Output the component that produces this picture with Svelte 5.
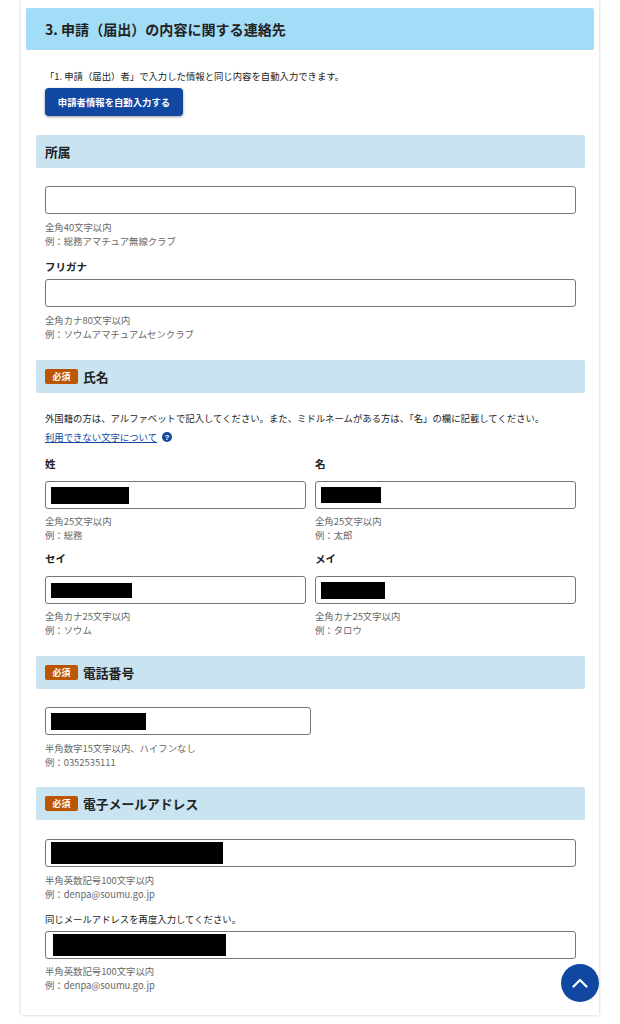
<script>
	const nameFields = [
		[
			{ label: '姓', limit: '全角25文字以内', example: '例：総務', mask: 78, maskH: 17 },
			{ label: '名', limit: '全角25文字以内', example: '例：太郎', mask: 60, maskH: 16 }
		],
		[
			{ label: 'セイ', limit: '全角カナ25文字以内', example: '例：ソウム', mask: 81, maskH: 15 },
			{ label: 'メイ', limit: '全角カナ25文字以内', example: '例：タロウ', mask: 64, maskH: 17 }
		]
	];
</script>

<div class="page">
	<main class="card">
		<h2 class="title">3. 申請（届出）の内容に関する連絡先</h2>

		<div class="autofill">
			<p class="note">「1. 申請（届出）者」で入力した情報と同じ内容を自動入力できます。</p>
			<button class="fill-btn" type="button">申請者情報を自動入力する</button>
		</div>

		<section class="section">
			<h3 class="head">所属</h3>
			<div class="body">
				<div class="field"></div>
				<p class="hint">全角40文字以内<br />例：総務アマチュア無線クラブ</p>
				<div class="label kana">フリガナ</div>
				<div class="field"></div>
				<p class="hint">全角カナ80文字以内<br />例：ソウムアマチュアムセンクラブ</p>
			</div>
		</section>

		<section class="section">
			<h3 class="head"><span class="req">必須</span>氏名</h3>
			<div class="body">
				<p class="note">外国籍の方は、アルファベットで記入してください。また、ミドルネームがある方は、「名」の欄に記載してください。</p>
				<p class="link-row">
					<a href="#chars">利用できない文字について</a>
					<span class="help">?</span>
				</p>
				{#each nameFields as row}
					<div class="row">
						{#each row as f}
							<div>
								<div class="label">{f.label}</div>
								<div class="field"><span class="mask" style="width: {f.mask}px; height: {f.maskH}px"></span></div>
								<p class="hint tight">{f.limit}<br />{f.example}</p>
							</div>
						{/each}
					</div>
				{/each}
			</div>
		</section>

		<section class="section">
			<h3 class="head"><span class="req">必須</span>電話番号</h3>
			<div class="body">
				<div class="field short"><span class="mask" style="width: 95px; height: 17px"></span></div>
				<p class="hint">半角数字15文字以内、ハイフンなし<br />例：0352535111</p>
			</div>
		</section>

		<section class="section mail">
			<h3 class="head"><span class="req">必須</span>電子メールアドレス</h3>
			<div class="body">
				<div class="field"><span class="mask" style="width: 172px; height: 22px"></span></div>
				<p class="hint mail-hint">半角英数記号100文字以内<br />例：denpa@soumu.go.jp</p>
				<p class="note again">同じメールアドレスを再度入力してください。</p>
				<div class="field"><span class="mask second" style="width: 173px; height: 22px"></span></div>
				<p class="hint mail-hint">半角英数記号100文字以内<br />例：denpa@soumu.go.jp</p>
			</div>
		</section>
	</main>

	<button class="to-top" type="button" aria-label="ページの先頭へ">
		<svg width="16" height="10" viewBox="0 0 16 10" fill="none">
			<path d="M1.500 8.500 8 2l6.500 6.500" stroke="#fff" stroke-width="2.200" stroke-linecap="round" stroke-linejoin="round" />
		</svg>
	</button>
</div>

<style>
	:global(body) {
		background: #fff;
		font-family: "Noto Sans CJK JP", "Noto Sans", sans-serif;
		color: #1a1a1a;
	}

	.page {
		position: relative;
		width: 620px;
		height: 1024px;
		overflow: hidden;
	}

	.card {
		width: 578px;
		height: 1015px;
		margin-left: 21px;
		padding: 8px 5px 0;
		box-sizing: border-box;
		background: #fff;
		box-shadow: 0 0 3px rgba(0, 0, 0, 0.22);
	}

	.title {
		margin: 0;
		height: 42px;
		padding-left: 19px;
		display: flex;
		align-items: center;
		font-size: 14.06px;
		font-weight: 700;
		background: #a3dcf7;
		border-radius: 2px;
		color: #222;
	}

	.autofill {
		padding: 19px 0 0 19px;
	}

	.note {
		margin: 0;
		font-size: 9.375px;
		line-height: 14px;
		color: #222;
	}

	.fill-btn {
		display: block;
		width: 138px;
		height: 28px;
		margin-top: 5px;
		padding: 0;
		border: 0;
		border-radius: 4px;
		background: #0f47a1;
		color: #fff;
		font: 700 9.375px "Noto Sans CJK JP", sans-serif;
		box-shadow: 0 1px 3px rgba(0, 0, 0, 0.4);
	}

	.section {
		margin: 19px 9px 0 10px;
	}

	.mail {
		margin-top: 18px;
	}

	.head {
		margin: 0;
		height: 33px;
		padding-left: 9px;
		display: flex;
		align-items: center;
		font-size: 12.8px;
		font-weight: 700;
		background: #c9e3f1;
		border-radius: 2px;
		color: #222;
	}

	.req {
		width: 33px;
		height: 15px;
		margin-right: 5px;
		display: flex;
		align-items: center;
		justify-content: center;
		font-size: 9px;
		color: #fff;
		background: #bb5500;
		border-radius: 2px;
	}

	.body {
		padding: 18px 9px 0;
	}

	.mail .body {
		padding-top: 19px;
	}

	.field {
		height: 28px;
		padding-left: 5px;
		box-sizing: border-box;
		display: flex;
		align-items: center;
		background: #fff;
		border: 1px solid #777;
		border-radius: 3px;
	}

	.short {
		width: 266px;
	}

	.mask {
		background: #000;
	}

	.second {
		margin-left: 2px;
	}

	.hint {
		margin: 6px 0 0;
		font-size: 9.375px;
		line-height: 14px;
		color: #666;
	}

	.tight {
		margin-top: 5px;
	}

	.mail-hint {
		margin-top: 5.5px;
	}

	.label {
		height: 18px;
		margin-bottom: 8px;
		font-size: 10.5px;
		line-height: 18px;
		font-weight: 700;
		color: #222;
	}

	.kana {
		margin-top: 10px;
		margin-bottom: 3px;
	}

	.link-row {
		display: flex;
		align-items: center;
		gap: 5px;
		margin: 5px 0 11px;
		font-size: 9.375px;
		line-height: 14px;
	}

	.link-row a {
		color: #0f47a1;
	}

	.help {
		width: 10px;
		height: 10px;
		border-radius: 50%;
		display: flex;
		align-items: center;
		justify-content: center;
		background: #0f47a1;
		color: #fff;
		font: 700 8px "Liberation Sans", sans-serif;
	}

	.row {
		display: grid;
		grid-template-columns: 1fr 1fr;
		gap: 9px;
		margin-top: 8px;
	}

	.again {
		margin-top: 11px;
		margin-bottom: 5px;
	}

	.to-top {
		position: absolute;
		left: 561px;
		top: 964px;
		width: 38px;
		height: 38px;
		padding: 0;
		border: 0;
		border-radius: 50%;
		background: #0f47a1;
		display: flex;
		align-items: center;
		justify-content: center;
	}
</style>
